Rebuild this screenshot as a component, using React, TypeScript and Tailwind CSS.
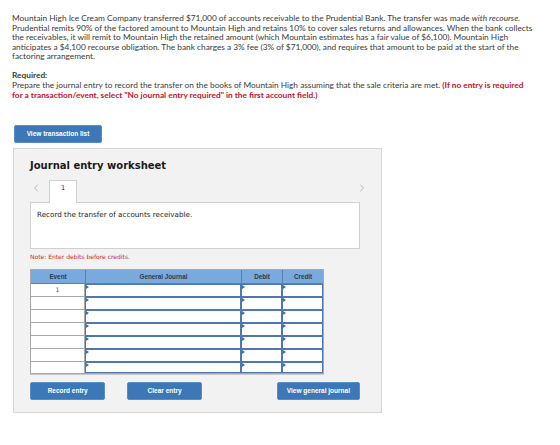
import { ChevronLeft, ChevronRight } from 'lucide-react';

const paragraph = [
  <>
    Mountain High Ice Cream Company transferred $71,000 of accounts receivable to the Prudential Bank. The transfer was made{' '}
    <em>with recourse.</em>
  </>,
  <>Prudential remits 90% of the factored amount to Mountain High and retains 10% to cover sales returns and allowances. When the bank collects</>,
  <>the receivables, it will remit to Mountain High the retained amount (which Mountain estimates has a fair value of $6,100). Mountain High</>,
  <>anticipates a $4,100 recourse obligation. The bank charges a 3% fee (3% of $71,000), and requires that amount to be paid at the start of the</>,
  <>factoring arrangement.</>,
];

const rowHeights = ['h-[13px]', 'h-[13px]', 'h-[13px]', 'h-[13px]', 'h-[13px]', 'h-[13px]', 'h-[11px]'];

function InputCell({ className }: { className: string }) {
  return (
    <div className={`relative border border-[#4f78b0] bg-white ${className}`}>
      <span className="absolute left-0 top-0 h-0 w-0 border-t-[2px] border-b-[2px] border-l-[3px] border-t-transparent border-b-transparent border-l-[#3a6fb5]" />
    </div>
  );
}

function BlueButton({ label, className }: { label: string; className: string }) {
  return (
    <button
      className={`h-[18px] rounded-[2px] border border-[#5a8cc6] bg-[#3c78b7] text-[6.5px] font-bold text-white ${className}`}
      style={{ fontFamily: '"Liberation Sans", Arial, sans-serif' }}
    >
      {label}
    </button>
  );
}

export default function App() {
  return (
    <div className="h-[445px] w-[560px] overflow-hidden bg-white">
      <div
        className="px-[12px] pt-[14px] text-[8.3px] leading-[9.6px] text-[#3a3a3a]"
        style={{ fontFamily: 'Lato, "Open Sans", sans-serif' }}
      >
        {paragraph.map((line, i) => (
          <div key={i} className="whitespace-nowrap">
            {line}
          </div>
        ))}
        <div className="mt-[9.5px] font-bold">Required:</div>
        <div className="whitespace-nowrap">
          Prepare the journal entry to record the transfer on the books of Mountain High assuming that the sale criteria are met.{' '}
          <span className="font-bold text-[#c4122f]">(If no entry is required</span>
        </div>
        <div className="whitespace-nowrap font-bold text-[#c4122f]">
          for a transaction/event, select "No journal entry required" in the first account field.)
        </div>
      </div>

      <BlueButton label="View transaction list" className="ml-[14px] mt-[25px] w-[88px]" />

      <div
        className="ml-[13px] mt-[5px] w-[369px] border border-[#d6d6d6] bg-[#f2f2f2] pb-[12px] pl-[16px] pr-[21px] pt-[10px]"
        style={{ fontFamily: '"DejaVu Sans", Verdana, sans-serif' }}
      >
        <div className="h-[14px] text-[10px] font-bold leading-[14px] text-[#1a1a1a]">Journal entry worksheet</div>

        <div className="mt-[7px] flex h-[22px] items-start">
          <ChevronLeft className="mt-[2px] h-[12px] w-[12px] text-[#a0a0a0]" strokeWidth={1.5} />
          <div className="relative z-10 ml-[7px] flex h-[23px] w-[28px] items-start justify-center border border-b-0 border-[#d0d0d0] bg-white pt-[3px] text-[6.5px] text-[#222]">
            1
          </div>
          <div className="flex-1" />
          <ChevronRight className="-mr-[8px] mt-[2px] h-[12px] w-[12px] text-[#a0a0a0]" strokeWidth={1.5} />
        </div>

        <div className="h-[47px] border border-[#d0d0d0] bg-white px-[6px] pt-[7px] text-[7.2px] text-[#222]">
          Record the transfer of accounts receivable.
        </div>

        <div className="mt-[4px] h-[8px] text-[6px] leading-[8px] text-[#c8283f]">Note: Enter debits before credits.</div>

        <div
          className="mt-[8px] w-[294px] border border-[#a9a9a9] shadow-[0_1px_0_#c8c8c8]"
          style={{ fontFamily: '"Liberation Sans", Arial, sans-serif' }}
        >
          <div className="flex h-[14px] border-b border-[#5a7fb0] bg-[#7aa9dd] text-[6.3px] font-bold leading-[13px] text-[#2b3a4e]">
            <div className="w-[54px] text-center">Event</div>
            <div className="w-[156px] border-l border-[#5a7fb0] text-center">General Journal</div>
            <div className="w-[41px] border-l border-[#5a7fb0] text-center">Debit</div>
            <div className="flex-1 border-l border-[#5a7fb0] text-center">Credit</div>
          </div>
          {rowHeights.map((h, i) => (
            <div key={i} className={`flex ${h}`}>
              <div
                className={`w-[54px] border-r border-[#a9a9a9] bg-white text-center text-[6.3px] leading-[12px] text-[#555] ${
                  i < rowHeights.length - 1 ? 'border-b' : ''
                }`}
                style={{ fontFamily: '"DejaVu Sans", Verdana, sans-serif' }}
              >
                {i === 0 ? '1' : ''}
              </div>
              <InputCell className="w-[156px]" />
              <InputCell className="w-[41px]" />
              <InputCell className="flex-1" />
            </div>
          ))}
        </div>

        <div className="mt-[8px] flex">
          <BlueButton label="Record entry" className="w-[77px]" />
          <BlueButton label="Clear entry" className="ml-[22px] w-[76px]" />
          <BlueButton label="View general journal" className="ml-[75px] w-[85px]" />
        </div>
      </div>
    </div>
  );
}
